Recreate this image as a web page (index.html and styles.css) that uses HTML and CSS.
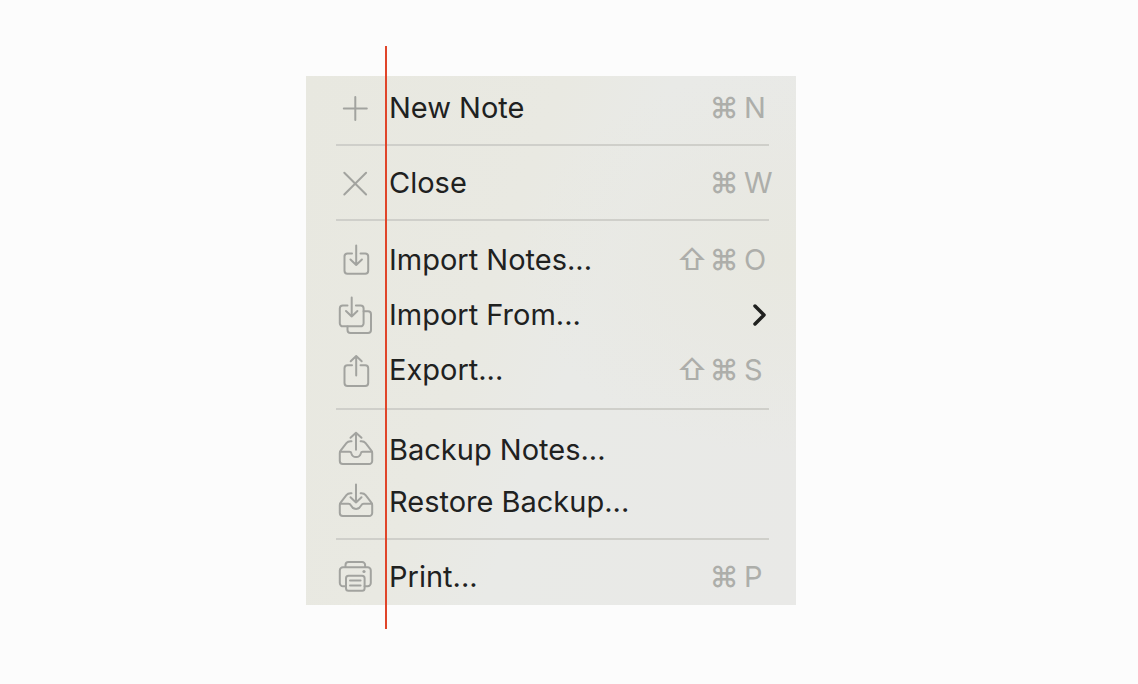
FILE: index.html
```html
<!DOCTYPE html>
<html lang="en">
<head>
  <meta charset="UTF-8">
  <meta name="viewport" content="width=device-width, initial-scale=1.0">
  <title>File Menu</title>
  <link rel="stylesheet" href="styles.css">
</head>
<body>
  <main class="stage">
    <div class="menu">
      <div class="menu-group">
        <button class="menu-item" type="button">
          <svg class="icon" viewBox="0 0 38 38" aria-hidden="true">
            <path d="M19.3 8v23M7.8 19.5h23"/>
          </svg>
          <span class="label">New Note</span>
          <span class="shortcut"><kbd class="cmd">⌘</kbd><kbd class="key">N</kbd></span>
        </button>
      </div>
      <hr>
      <div class="menu-group">
        <button class="menu-item" type="button">
          <svg class="icon" viewBox="0 0 38 38" aria-hidden="true">
            <path d="M8.3 8.7l21.8 21.8M30.100 8.7L8.300 30.500"/>
          </svg>
          <span class="label">Close</span>
          <span class="shortcut"><kbd class="cmd">⌘</kbd><kbd class="key">W</kbd></span>
        </button>
      </div>
      <hr>
      <div class="menu-group menu-group-files">
        <button class="menu-item" type="button">
          <svg class="icon" viewBox="0 0 38 38" aria-hidden="true">
            <path d="M16 12.500h-4.500a3 3 0 0 0-3 3v14.200a3 3 0 0 0 3 3h17.700a3 3 0 0 0 3-3V15.500a3 3 0 0 0-3-3h-4.700"/>
            <path d="M20.200 4.500V24M14.500 18.500l5.700 5.500 5.700-5.500"/>
          </svg>
          <span class="label">Import Notes...</span>
          <span class="shortcut"><kbd class="shift">⇧</kbd><kbd class="cmd">⌘</kbd><kbd class="key">O</kbd></span>
        </button>
        <button class="menu-item" type="button" aria-haspopup="true">
          <svg class="icon" viewBox="0 0 38 38" aria-hidden="true">
            <path d="M11.500 9.500H6.800a3 3 0 0 0-3 3v14.800a3 3 0 0 0 3 3h17.800a3 3 0 0 0 3-3V12.500a3 3 0 0 0-3-3h-4.700"/>
            <path d="M15.700 1.500V20.500M10 15l5.700 5.500 5.700-5.500"/>
            <path d="M27.600 15.300h4.400a3 3 0 0 1 3 3v15.700a3 3 0 0 1-3 3H14.500a3 3 0 0 1-3-3v-3.500"/>
          </svg>
          <span class="label">Import From...</span>
          <svg class="chevron" viewBox="0 0 14 24" aria-hidden="true">
            <path d="M2 3l9 9-9 9"/>
          </svg>
        </button>
        <button class="menu-item" type="button">
          <svg class="icon" viewBox="0 0 38 38" aria-hidden="true">
            <path d="M16 14.200h-4.500a3 3 0 0 0-3 3v14.800a3 3 0 0 0 3 3h17.700a3 3 0 0 0 3-3V17.200a3 3 0 0 0-3-3h-4.700"/>
            <path d="M20.200 24.500V5M14.700 10.300l5.500-5.300 5.500 5.300"/>
          </svg>
          <span class="label">Export...</span>
          <span class="shortcut"><kbd class="shift">⇧</kbd><kbd class="cmd">⌘</kbd><kbd class="key">S</kbd></span>
        </button>
      </div>
      <hr>
      <div class="menu-group menu-group-backup">
        <button class="menu-item" type="button">
          <svg class="icon" viewBox="0 0 38 38" aria-hidden="true">
            <path d="M15.500 10.200h-1c-1.800 0-3 .5-4.100 1.900L4.800 19.300c-.7.900-1 1.600-1 2.700v8a3 3 0 0 0 3 3h26.400a3 3 0 0 0 3-3v-8c0-1.100-.3-1.800-1-2.700l-5.600-7.200c-1.100-1.400-2.300-1.900-4.100-1.900h-.900"/>
            <path d="M4 20.800h9.500c1.200 0 1.700.6 1.900 1.600.5 2.200 2.300 3.700 4.700 3.700s4.200-1.500 4.700-3.700c.2-1 .7-1.600 1.900-1.600H36"/>
            <path d="M20 18.800V1.800M14.500 6.800l5.500-5 5.500 5"/>
          </svg>
          <span class="label">Backup Notes...</span>
        </button>
        <button class="menu-item" type="button">
          <svg class="icon" viewBox="0 0 38 38" aria-hidden="true">
            <path d="M15.500 10.200h-1c-1.800 0-3 .5-4.100 1.900L4.800 19.300c-.7.900-1 1.600-1 2.700v8a3 3 0 0 0 3 3h26.400a3 3 0 0 0 3-3v-8c0-1.100-.3-1.800-1-2.700l-5.600-7.200c-1.100-1.400-2.300-1.900-4.100-1.900h-.900"/>
            <path d="M4 20.800h8.500c1.200 0 1.900.5 2.500 1.600 1.200 2.300 2.700 3.700 5.100 3.700s3.900-1.400 5.100-3.700c.6-1.100 1.300-1.600 2.500-1.600H36"/>
            <path d="M20 1.500V19.500M14.500 14.300l5.500 5.200 5.500-5.200"/>
          </svg>
          <span class="label">Restore Backup...</span>
        </button>
      </div>
      <hr>
      <div class="menu-group">
        <button class="menu-item" type="button">
          <svg class="icon" viewBox="0 0 38 38" aria-hidden="true">
            <path d="M9.500 9V7a3 3 0 0 1 3-3h13.600a3 3 0 0 1 3 3v2"/>
            <path d="M10 28.300H7a3.200 3.200 0 0 1-3.200-3.200V12.500A3.200 3.200 0 0 1 7 9.300h24.600a3.200 3.200 0 0 1 3.200 3.200v12.600a3.200 3.200 0 0 1-3.200 3.200h-3"/>
            <rect x="10" y="17.800" width="18.600" height="15" rx="2.500"/>
            <path d="M14 22.500h10.600M14 27.500h10.600"/>
            <circle class="dot" cx="28" cy="13.500" r="1.600"/>
          </svg>
          <span class="label">Print...</span>
          <span class="shortcut"><kbd class="cmd">⌘</kbd><kbd class="key">P</kbd></span>
        </button>
      </div>
      <div class="guide"></div>
    </div>
  </main>
</body>
</html>
```
FILE: styles.css
```css
body {
  margin: 0;
  background-color: #fcfcfc;
  font-family: Inter, "Liberation Sans", sans-serif;
}

.stage {
  padding: 76px 36px 56px 0;
}

.menu {
  position: relative;
  box-sizing: border-box;
  max-width: 490px;
  margin: 0 auto;
  padding: 7px 24px 3px 30px;
  background:
    radial-gradient(ellipse at 100% 35%, #e8e8e0 0%, rgba(232, 232, 224, 0) 40%),
    linear-gradient(110deg, #e8e8e0 0%, #e9e9e2 38%, #e9eae7 54%, #e9e9e7 100%);
}

.menu-group {
  display: flex;
  flex-direction: column;
}

.menu-group-files {
  gap: 5px;
  padding: 2px 0;
}

.menu-group-backup {
  gap: 2px;
  padding-top: 3px;
}

.menu-item {
  display: flex;
  align-items: center;
  width: 100%;
  height: 50px;
  padding: 0;
  border: none;
  background: none;
  color: #20211f;
  font-family: inherit;
  font-size: 29px;
  line-height: 36px;
  text-align: left;
}

hr {
  height: 2px;
  margin: 11px 3px 12px 0;
  border: none;
  background-color: #cfcfca;
}

.icon {
  flex: none;
  width: 38px;
  height: 38px;
  margin-right: 15px;
  fill: none;
  stroke: #a2a39f;
  stroke-width: 2;
  stroke-linecap: round;
  stroke-linejoin: round;
}

.icon .dot {
  fill: #a2a39f;
  stroke: none;
}

.label {
  flex: 1;
  white-space: nowrap;
}

.shortcut {
  display: flex;
  color: #adaeaa;
}

.shortcut kbd {
  font-family: inherit;
}

.shift,
.cmd {
  width: 32px;
  font-weight: 500;
  text-align: center;
}

.key {
  width: 28px;
  margin-left: 4px;
}

.chevron {
  width: 14px;
  height: 24px;
  margin-right: 5px;
  fill: none;
  stroke: #20211f;
  stroke-width: 3.5;
  stroke-linecap: round;
  stroke-linejoin: round;
}

/* vertical alignment guide over the text edge */
.guide {
  position: absolute;
  top: -30px;
  bottom: -24px;
  left: 79px;
  width: 2px;
  background-color: #e0452a;
}
```
